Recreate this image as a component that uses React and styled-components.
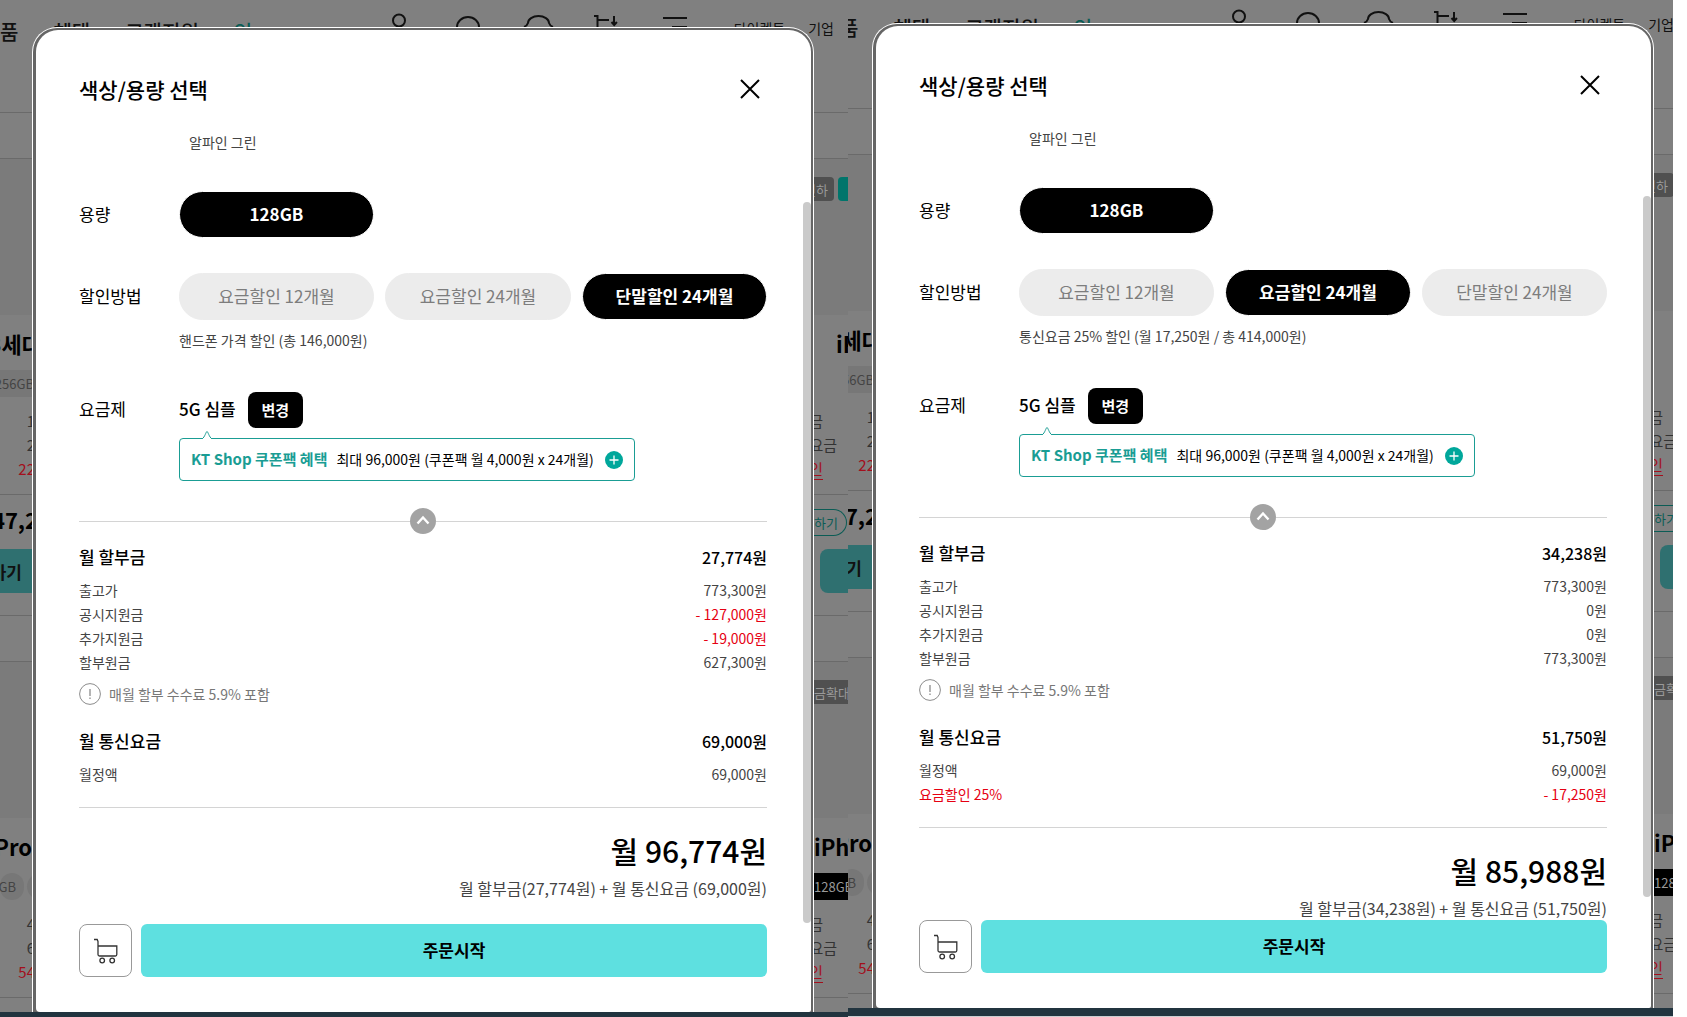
import React from 'react';
import styled, { createGlobalStyle } from 'styled-components';

const screens = [
	{
		id: 'device',
		method: '단말할인 24개월',
		methodNote: '핸드폰 가격 할인 (총 146,000원)',
		installment: '27,774원',
		installmentRows: [
			{ name: '출고가', price: '773,300원' },
			{ name: '공시지원금', price: '- 127,000원', red: true },
			{ name: '추가지원금', price: '- 19,000원', red: true },
			{ name: '할부원금', price: '627,300원' },
		],
		fee: '69,000원',
		feeRows: [{ name: '월정액', price: '69,000원' }],
		total: '월 96,774원',
		summary: '월 할부금(27,774원) + 월 통신요금 (69,000원)',
		thumb: '80fr 721fr 1fr',
	},
	{
		id: 'plan',
		cropped: true,
		method: '요금할인 24개월',
		methodNote: '통신요금 25% 할인 (월 17,250원 / 총 414,000원)',
		installment: '34,238원',
		installmentRows: [
			{ name: '출고가', price: '773,300원' },
			{ name: '공시지원금', price: '0원' },
			{ name: '추가지원금', price: '0원' },
			{ name: '할부원금', price: '773,300원' },
		],
		fee: '51,750원',
		feeRows: [
			{ name: '월정액', price: '69,000원' },
			{ name: '요금할인 25%', price: '- 17,250원', red: true, redName: true },
		],
		total: '월 85,988원',
		summary: '월 할부금(34,238원) + 월 통신요금 (51,750원)',
		thumb: '78fr 701fr 23fr',
	},
];

const methods = ['요금할인 12개월', '요금할인 24개월', '단말할인 24개월'];

const App = () => (
	<>
		<GlobalStyle />
		<Page>
			{screens.map(screen => (
				<Crop key={screen.id} $cropped={screen.cropped}>
					<Screen $cropped={screen.cropped}>
						<Shop />
						<OptionModal {...screen} />
						<BottomBar $cropped={screen.cropped} />
					</Screen>
				</Crop>
			))}
		</Page>
	</>
);

const OptionModal = ({
	id,
	method,
	methodNote,
	installment,
	installmentRows,
	fee,
	feeRows,
	total,
	summary,
	thumb,
}) => (
	<Frame role="dialog" aria-labelledby={`${id}-title`}>
		<Panel>
			<ModalHeader>
				<Title id={`${id}-title`}>색상/용량 선택</Title>
				<CloseButton aria-label="닫기">
					<svg width="20" height="20" viewBox="0 0 20 20" fill="none" stroke="#000" strokeWidth="2">
						<path d="M1 1l18 18M19 1L1 19" />
					</svg>
				</CloseButton>
			</ModalHeader>
			<ScrollArea>
				<Content>
					<ColorName>알파인 그린</ColorName>
					<Field>
						<Label>용량</Label>
						<Pills>
							<Pill $selected>128GB</Pill>
						</Pills>
					</Field>
					<MethodField>
						<Label>할인방법</Label>
						<Pills>
							{methods.map(name => (
								<Pill key={name} $selected={name === method} aria-pressed={name === method}>
									{name}
								</Pill>
							))}
						</Pills>
						<MethodNote>{methodNote}</MethodNote>
					</MethodField>
					<PlanField>
						<Label>요금제</Label>
						<Plan>
							<PlanName>5G 심플</PlanName>
							<ChangeButton>변경</ChangeButton>
						</Plan>
						<Coupon>
							<CouponArrow width="12" height="9" viewBox="0 0 12 9">
								<path d="M1 9C4 7 5 1.500 6 1.500S8 7 11 9" fill="#fff" stroke="#1a9d94" />
							</CouponArrow>
							<CouponTitle>KT Shop 쿠폰팩 혜택</CouponTitle>
							<CouponText>최대 96,000원 (쿠폰팩 월 4,000원 x 24개월)</CouponText>
							<PlusButton aria-label="쿠폰팩 더보기">
								<svg width="18" height="18" viewBox="0 0 18 18">
									<circle cx="9" cy="9" r="9" fill="#00a79b" />
									<path d="M9 4.500v9M4.500 9h9" stroke="#fff" strokeWidth="1.300" />
								</svg>
							</PlusButton>
						</Coupon>
					</PlanField>
					<Fold>
						<FoldButton aria-label="접기">
							<svg width="26" height="26" viewBox="0 0 26 26" fill="none">
								<circle cx="13" cy="13" r="13" fill="#a3a3a3" />
								<path d="M7.500 15.500L13 9.500l5.500 6" stroke="#fff" strokeWidth="2.400" />
							</svg>
						</FoldButton>
					</Fold>
					<PriceList>
						<PriceHead>
							<dt>월 할부금</dt>
							<HeadValue>{installment}</HeadValue>
						</PriceHead>
						{installmentRows.map(row => <Price key={row.name} {...row} />)}
					</PriceList>
					<Notice>
						<svg width="22" height="22" viewBox="0 0 22 22" fill="none" stroke="#8c8c8c">
							<circle cx="11" cy="11" r="10.400" />
							<path d="M11 6v7M11 14.500v1.500" strokeWidth="1.300" />
						</svg>
						매월 할부 수수료 5.9% 포함
					</Notice>
					<PriceList>
						<PriceHead>
							<dt>월 통신요금</dt>
							<HeadValue>{fee}</HeadValue>
						</PriceHead>
						{feeRows.map(row => <Price key={row.name} {...row} />)}
					</PriceList>
					<Result>
						<Total>{total}</Total>
						<Summary>{summary}</Summary>
					</Result>
				</Content>
				<Track $rows={thumb}>
					<Thumb />
				</Track>
			</ScrollArea>
			<ModalFooter>
				<CartButton aria-label="장바구니">
					<svg width="26" height="26" viewBox="0 0 26 26" fill="none" stroke="#333" strokeWidth="1.300">
						<path d="M1 1.500h3.200l.8 2V16.500q0 1.500 1.500 1.500H22.500q1.200 0 1.300-1.500V8H5" />
						<circle cx="9.200" cy="22.500" r="2.300" />
						<circle cx="19.200" cy="22.500" r="2.300" />
					</svg>
				</CartButton>
				<OrderButton>주문시작</OrderButton>
			</ModalFooter>
		</Panel>
	</Frame>
);

const Price = ({ name, price, red, redName }) => (
	<PriceRow>
		<PriceName $red={redName}>{name}</PriceName>
		<PriceValue $red={red}>{price}</PriceValue>
	</PriceRow>
);

// 모달 뒤로 어둡게 보이는 상품 목록
const Shop = () => (
	<Backdrop aria-hidden="true">
		<ShopHeader>
			<Menu>
				<span>품</span>
				<span>혜택</span>
				<span>고객지원</span>
				<MenuAccent>인</MenuAccent>
			</Menu>
			<HeaderIcons />
			<SubMenu>
				<span>다이렉트</span>
				<span>기업</span>
			</SubMenu>
		</ShopHeader>
		<SubHeader />
		<Cards>
			<div>
				<LeftCard name="3세대" chip="256GB" specs={['1', '2', '22']} price="47,2" />
				<LeftCard name="Pro" chip="GB" rounded specs={['4', '6', '54']} />
			</div>
			<div>
				<RightCard>
					<Media>
						<Badge>인하</Badge>
						<Badge $green />
					</Media>
					<Name $indent={22}>iPhone</Name>
					<Chips />
					<RightSpecs />
					<PriceBox>
						<Compare>교하기</Compare>
					</PriceBox>
					<BuyBox>
						<Buy $indent={6} />
					</BuyBox>
				</RightCard>
				<RightCard>
					<Media>
						<Badge $square>금확대</Badge>
					</Media>
					<Name>iPhone</Name>
					<Chips>
						<Chip $dark>128GB</Chip>
					</Chips>
					<RightSpecs />
					<PriceBox />
				</RightCard>
			</div>
		</Cards>
	</Backdrop>
);

const HeaderIcons = () => (
	<svg width="310" height="30" viewBox="390 0 310 30" fill="none" stroke="#111" strokeWidth="2">
		<circle cx="399" cy="20.500" r="6" />
		<path d="M457 30v-3a11 10 0 0 1 22 0v3" />
		<path d="M524 27q3-1 4-4a10.500 7 0 0 1 21 0q1 3 4 4" />
		<path d="M594 16h3.500v14M598 20h11M614 16v8M611.500 22l2.700 3 2.700-3" />
		<path d="M663 18h24M672 27h15" />
	</svg>
);

const LeftCard = ({ name, chip, rounded, specs, price }) => (
	<Card>
		<Media />
		<LeftName $end={price ? 42 : 32}>{name}</LeftName>
		<Chips>
			<LeftChip $end={rounded ? 24 : 42} $rounded={rounded}>{chip}</LeftChip>
			{rounded && <LeftChip $end={40} $rounded />}
		</Chips>
		<Specs>
			<LeftSpec>{specs[0]}</LeftSpec>
			<LeftSpec>{specs[1]}</LeftSpec>
			<LeftSpec $red>{specs[2]}</LeftSpec>
		</Specs>
		<PriceBox>
			<LeftName $end={38}>{price}</LeftName>
		</PriceBox>
		{price && (
			<BuyBox>
				<Buy>가기</Buy>
			</BuyBox>
		)}
	</Card>
);

const RightSpecs = () => (
	<Specs>
		<Spec $end={9}>금</Spec>
		<Spec $end={23}>요금</Spec>
		<Spec $end={9} $red>인</Spec>
	</Specs>
);

const GlobalStyle = createGlobalStyle`
	* {
		box-sizing: border-box;
	}

	body {
		margin: 0;
		background: #fff;
		color: #000;
		font-family: 'Noto Sans CJK KR', 'Noto Sans', sans-serif;
	}

	button {
		padding: 0;
		border: 0;
		background: none;
		color: inherit;
		font-family: inherit;
		cursor: pointer;
	}

	svg {
		display: block;
		flex: none;
	}

	dl,
	dd,
	h2,
	p {
		margin: 0;
	}
`;

const Page = styled.main`
	height: 100vh;
	padding-right: 14px;
	display: grid;
	grid-template-columns: 848fr 825fr;
`;

const Crop = styled.div`
	min-width: 0;
	min-height: 0;
	display: grid;
	overflow: hidden;
	border-bottom: ${props => (props.$cropped ? '1px solid #c9cdd0' : '0')};
`;

const Screen = styled.section`
	min-height: 0;
	margin: ${props => (props.$cropped ? '-4px -15px 0 -8px' : '0')};
	display: grid;
	grid-template-columns: minmax(0, 1fr);
	grid-template-rows: minmax(0, 1fr) auto;
	background: #808080;
`;

const BottomBar = styled.div`
	height: ${props => (props.$cropped ? 8 : 5)}px;
	background: #21343f;
`;

const Frame = styled.div`
	grid-area: 1 / 1;
	min-height: 0;
	margin: 27px 34px 0 32px;
	padding: 2px 2px 0 3px;
	display: flex;
	border: 1px solid #fff;
	border-bottom: 0;
	border-radius: 25px 25px 0 0;
	background: #666;
	z-index: 1;
`;

const Panel = styled.div`
	flex: 1;
	min-width: 0;
	display: flex;
	flex-direction: column;
	border-radius: 22px 22px 2px 4px;
	background: #fff;
	overflow: hidden;
`;

const ModalHeader = styled.header`
	padding: 43px 51px 17px 43px;
	display: flex;
	justify-content: space-between;
	align-items: center;
`;

const Title = styled.h2`
	font-size: 21px;
	font-weight: 500;
	line-height: 32px;
`;

const CloseButton = styled.button`
	width: 20px;
	height: 20px;
`;

const ScrollArea = styled.div`
	flex: 1;
	min-height: 0;
	display: flex;
	overflow: hidden;
`;

const Content = styled.div`
	flex: 1;
	min-width: 0;
	padding: 9px 36px 0 43px;
`;

const Track = styled.div`
	width: 8px;
	display: grid;
	grid-template-rows: ${props => props.$rows};
`;

const Thumb = styled.div`
	grid-row: 2;
	border-radius: 4px;
	background: #cacaca;
`;

const ColorName = styled.p`
	margin-left: 110px;
	color: #444;
	font-size: 14px;
	line-height: 22px;
`;

const Field = styled.div`
	margin-top: 38px;
	display: grid;
	grid-template-columns: 100px minmax(0, 1fr);
	align-items: center;
`;

const MethodField = styled(Field)`
	margin-top: 35px;
`;

const PlanField = styled(Field)`
	margin-top: 41px;
`;

const Label = styled.span`
	padding-bottom: 2px;
	font-size: 17px;
	line-height: 24px;
`;

const Pills = styled.div`
	display: grid;
	grid-template-columns: 195fr 186fr 185fr;
	gap: 11px;
`;

const Pill = styled.button`
	height: 47px;
	padding-bottom: 2px;
	border: 1px solid ${props => (props.$selected ? '#fff' : '#ececec')};
	border-radius: 24px;
	background: ${props => (props.$selected ? '#000' : '#ececec')};
	color: ${props => (props.$selected ? '#fff' : '#7d7d7d')};
	font-size: 17px;
	font-weight: ${props => (props.$selected ? 700 : 400)};
`;

const MethodNote = styled.p`
	grid-column: 2;
	margin-top: 9px;
	color: #444;
	font-size: 14px;
	line-height: 22px;
`;

const Plan = styled.div`
	display: flex;
	align-items: center;
	gap: 12px;
`;

const PlanName = styled.span`
	padding-bottom: 2px;
	font-size: 17px;
	font-weight: 500;
	line-height: 24px;
`;

const ChangeButton = styled.button`
	width: 55px;
	height: 36px;
	padding-bottom: 2px;
	border-radius: 8px;
	background: #000;
	color: #fff;
	font-size: 15px;
	font-weight: 700;
`;

const Coupon = styled.div`
	grid-column: 2;
	justify-self: start;
	position: relative;
	height: 43px;
	margin-top: 10px;
	padding: 0 11px;
	display: flex;
	align-items: center;
	border: 1px solid #1a9d94;
	border-radius: 4px;
	white-space: nowrap;
`;

const CouponArrow = styled.svg`
	position: absolute;
	left: 21px;
	top: -9px;
`;

const CouponTitle = styled.strong`
	margin-right: 9px;
	padding-bottom: 2px;
	color: #1a9d94;
	font-size: 15px;
`;

const CouponText = styled.span`
	padding-bottom: 2px;
	font-size: 14px;
`;

const PlusButton = styled.button`
	margin-left: 11px;
`;

const Fold = styled.div`
	margin-top: 27px;
	display: flex;
	align-items: center;

	&::before,
	&::after {
		content: '';
		flex: 1;
		height: 1px;
		background: #d4d4d4;
	}
`;

const FoldButton = styled.button`
	width: 26px;
	height: 26px;
`;

const PriceList = styled.dl`
	margin-top: 11px;
`;

const PriceRow = styled.div`
	display: flex;
	justify-content: space-between;
	color: #444;
	font-size: 14px;
	line-height: 24px;
`;

const PriceHead = styled(PriceRow)`
	margin-bottom: 9px;
	color: #000;
	font-size: 17px;
	font-weight: 500;
`;

const HeadValue = styled.dd`
	font-size: 16px;
`;

const PriceName = styled.dt`
	color: ${props => (props.$red ? '#e60012' : 'inherit')};
`;

const PriceValue = styled.dd`
	color: ${props => (props.$red ? '#e60012' : 'inherit')};
`;

const Notice = styled.p`
	margin: 9px 0 24px;
	display: flex;
	align-items: center;
	gap: 8px;
	color: #777;
	font-size: 14px;
	line-height: 22px;

	& + ${PriceList} {
		margin-top: 0;
	}
`;

const Result = styled.div`
	margin-top: 21px;
	padding-top: 20px;
	border-top: 1px solid #d4d4d4;
	text-align: right;
`;

const Total = styled.p`
	font-size: 30px;
	font-weight: 500;
	line-height: 44px;
`;

const Summary = styled.p`
	margin-top: 4px;
	color: #444;
	font-size: 16px;
	line-height: 24px;
`;

const ModalFooter = styled.footer`
	padding: 0 44px 35px 43px;
	display: flex;
	gap: 9px;
`;

const CartButton = styled.button`
	width: 53px;
	height: 53px;
	display: flex;
	justify-content: center;
	align-items: center;
	border: 1px solid #999;
	border-radius: 8px;
`;

const OrderButton = styled.button`
	flex: 1;
	height: 53px;
	padding-bottom: 2px;
	border-radius: 6px;
	background: #5ee0e0;
	font-size: 17px;
	font-weight: 700;
`;

const Backdrop = styled.div`
	grid-area: 1 / 1;
	min-height: 0;
	overflow: hidden;
	color: #111;
	white-space: nowrap;
`;

const ShopHeader = styled.div`
	height: 112px;
	display: flex;
`;

const Menu = styled.div`
	width: 390px;
	padding-top: 16px;
	display: flex;
	gap: 35px;
	font-size: 20px;
	font-weight: 500;
	line-height: 32px;
`;

const MenuAccent = styled.span`
	color: #0b5c55;
`;

const SubMenu = styled.div`
	margin-left: auto;
	padding: 18px 14px 0 0;
	display: flex;
	gap: 23px;
	font-size: 14px;
	line-height: 20px;
`;

const SubHeader = styled.div`
	height: 46px;
	border-top: 1px solid #6a6a6a;
`;

const Cards = styled.div`
	display: flex;
	justify-content: space-between;
`;

const Card = styled.div`
	width: 60px;
	height: 458px;
	margin-bottom: 45px;
	border: solid #6a6a6a;
	border-width: 1px 0;
	overflow: hidden;
`;

const RightCard = styled(Card)`
	width: 34px;
`;

const Media = styled.div`
	height: 156px;
	margin-bottom: 12px;
	padding-top: 18px;
	display: flex;
	gap: 4px;
	background: #7b7b7b;
`;

const Badge = styled.span`
	flex: none;
	width: ${props => (props.$square ? 40 : 20)}px;
	height: 24px;
	display: flex;
	justify-content: ${props => (props.$square ? 'flex-start' : 'flex-end')};
	align-items: center;
	border-radius: ${props => (props.$green ? '4px 0 0 4px' : '0 4px 4px 0')};
	padding-right: ${props => (props.$square ? 0 : 6)}px;
	background: ${props => (props.$green ? '#00756b' : '#505050')};
	color: #999;
	font-size: 13px;
	overflow: hidden;
`;

const Name = styled.div`
	height: 32px;
	margin-bottom: 11px;
	padding-left: ${props => props.$indent || 0}px;
	font-size: 22px;
	font-weight: 700;
	line-height: 32px;
	color: #000;
`;

const LeftName = styled(Name)`
	width: ${props => props.$end}px;
	display: flex;
	justify-content: flex-end;
`;

const Chips = styled.div`
	height: 27px;
	margin-bottom: 12px;
	display: flex;
	gap: 3px;
`;

const Chip = styled.span`
	height: 27px;
	background: ${props => (props.$dark ? '#000' : '#777')};
	color: ${props => (props.$dark ? '#999' : '#444')};
	font-size: 13px;
	line-height: 27px;
`;

const LeftChip = styled(Chip)`
	flex: none;
	width: ${props => props.$end}px;
	display: flex;
	justify-content: flex-end;
	padding-right: 8px;
	border-radius: ${props => (props.$rounded ? '14px' : '0')};
`;

const Specs = styled.div`
	height: 86px;
	border-bottom: 1px solid #6a6a6a;
	font-size: 15px;
	line-height: 24px;
`;

const Spec = styled.div`
	width: ${props => props.$end}px;
	height: 24px;
	display: flex;
	justify-content: flex-end;
	color: ${props => (props.$red ? '#a30f1c' : '#333')};
	text-decoration: ${props => (props.$red ? 'underline' : 'none')};
	text-underline-offset: 4px;
`;

const LeftSpec = styled(Spec)`
	width: 35px;
	text-decoration: none;
`;

const PriceBox = styled.div`
	height: 54px;
	padding-top: 8px;
`;

const Compare = styled.div`
	width: 33px;
	height: 27px;
	margin-top: 6px;
	padding-right: 8px;
	display: flex;
	justify-content: flex-end;
	align-items: center;
	border: 1px solid #0b5c55;
	border-left: 0;
	border-radius: 0 14px 14px 0;
	color: #0b5c55;
	font-size: 13px;
`;

const BuyBox = styled.div`
	display: flex;
`;

const Buy = styled.div`
	width: 60px;
	height: 44px;
	margin-left: ${props => props.$indent || 0}px;
	padding-right: 38px;
	display: flex;
	justify-content: flex-end;
	align-items: center;
	border-radius: ${props => (props.$indent ? '8px 0 0 8px' : '0')};
	background: #2f7070;
	font-size: 17px;
	font-weight: 700;
`;

export default App;
